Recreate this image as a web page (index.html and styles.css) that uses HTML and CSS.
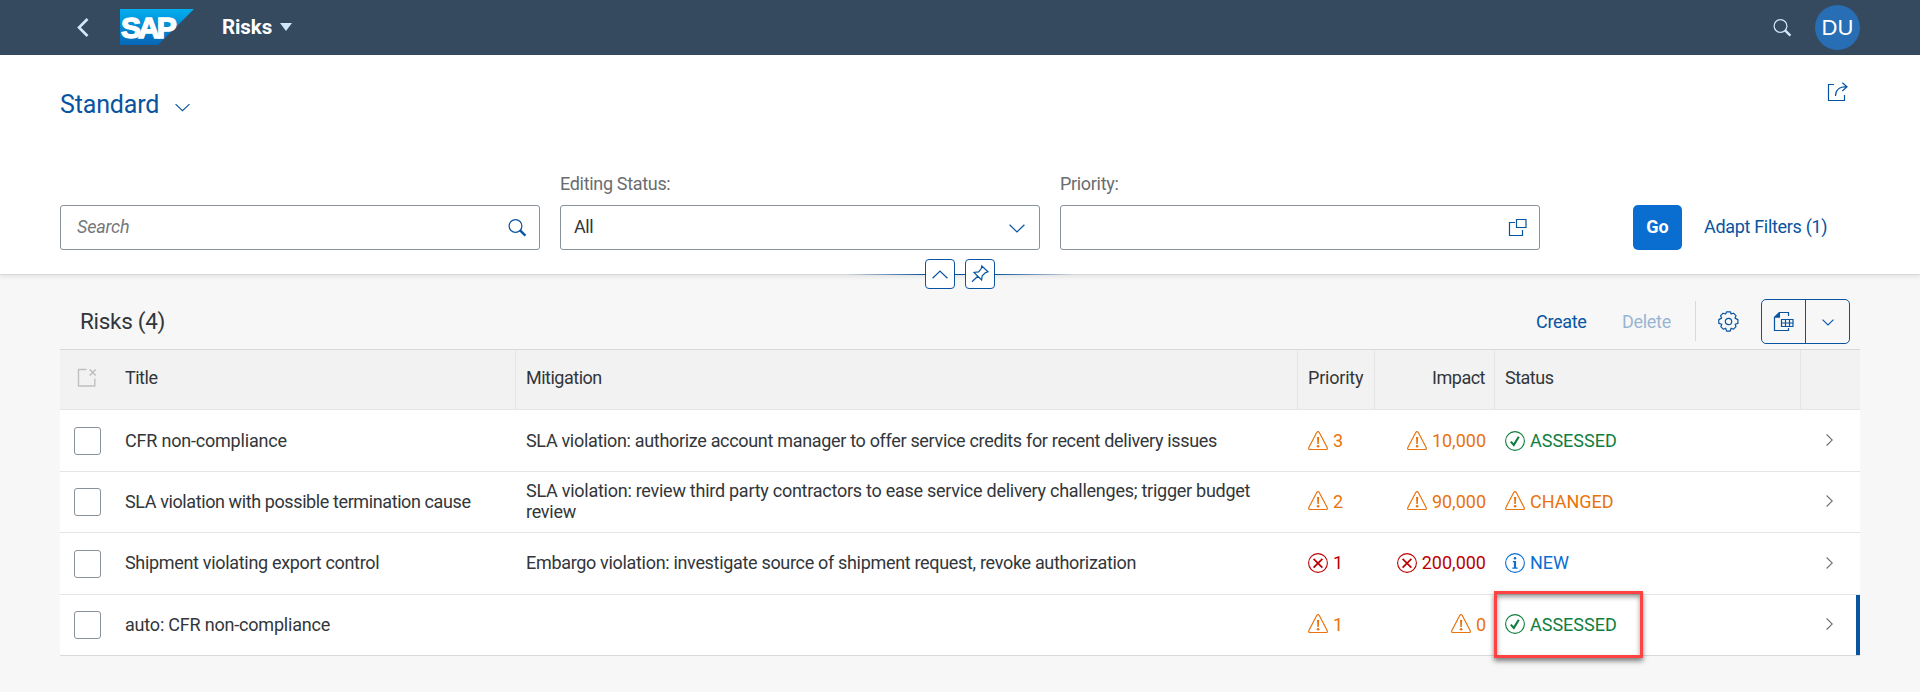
FILE: index.html
```html
<!DOCTYPE html>
<html lang="en">
<head>
<meta charset="utf-8">
<title>Risks</title>
<link rel="stylesheet" href="styles.css">
</head>
<body>
<svg class="defs" width="0" height="0">
  <symbol id="warn" viewBox="0 0 20 20"><path d="M8.700 1.500Q10 -.4 11.300 1.500L19 16.200Q20 18.500 18 18.500H2Q0 18.500 1 16.200Z" fill="none" stroke="currentColor" stroke-width="1.200"/><path d="M9 6h2.200l-.4 7h-1.400z" fill="currentColor"/><circle cx="10.100" cy="15.300" r="1.300" fill="currentColor"/></symbol>
  <symbol id="error" viewBox="0 0 20 20"><circle cx="10" cy="10" r="9.400" fill="none" stroke="currentColor" stroke-width="1.100"/><path d="M5.600 5.800l8.800 8.800M14.400 5.800l-8.800 8.800" stroke="currentColor" stroke-width="1.700"/></symbol>
  <symbol id="ok" viewBox="0 0 20 20"><circle cx="10" cy="10" r="9.400" fill="none" stroke="currentColor" stroke-width="1.100"/><path d="M5.800 10.600l3 3.300 5-8.200" fill="none" stroke="currentColor" stroke-width="2.100"/></symbol>
  <symbol id="info" viewBox="0 0 20 20"><circle cx="10" cy="10" r="9.400" fill="none" stroke="currentColor" stroke-width="1.100"/><circle cx="10" cy="5.200" r="1.300" fill="currentColor"/><path d="M7.800 8h3.300v6.500h1.600v1.300H7.300v-1.300h1.600V9.200H7.800z" fill="currentColor"/></symbol>
  <symbol id="search" viewBox="0 0 19 18"><circle cx="7.500" cy="7" r="6.400" fill="none" stroke="currentColor" stroke-width="1.200"/><path d="M11.800 11.200l5.600 5.400" stroke="currentColor" stroke-width="2.400"/></symbol>
  <symbol id="down" viewBox="0 0 16 9"><path d="M.6.8L8 7.900 15.400.8" fill="none" stroke="currentColor" stroke-width="1.200"/></symbol>
  <symbol id="next" viewBox="0 0 7 12"><path d="M.6.500L6.300 6 .6 11.500" fill="none" stroke="currentColor" stroke-width="1.100"/></symbol>
</svg>

<header class="shell">
  <svg class="back" width="12" height="19" viewBox="0 0 12 19"><path d="M10.500 1L2 9.500 10.500 18" fill="none" stroke="currentColor" stroke-width="2.600"/></svg>
  <svg class="logo" width="74" height="36" viewBox="0 0 74 36">
    <defs><linearGradient id="lg" x1="0" y1="0" x2="0" y2="1"><stop offset="0" stop-color="#00aeef"/><stop offset="1" stop-color="#0766b8"/></linearGradient></defs>
    <path d="M0 0H74L38 36H0Z" fill="url(#lg)"/>
    <text class="logo-text" x="1" y="29">SAP</text>
  </svg>
  <span class="app-title">Risks</span>
  <svg class="tri" width="12" height="8" viewBox="0 0 12 8"><path d="M0 0H12L6 8Z" fill="currentColor"/></svg>
  <svg class="shell-search" width="19" height="18"><use href="#search"/></svg>
  <span class="avatar">DU</span>
</header>

<section class="page-header">
  <div class="variant">
    <span class="variant-title">Standard</span>
    <svg class="variant-arrow" width="15" height="9"><use href="#down"/></svg>
    <svg class="share" width="21" height="19" viewBox="0 0 21 19"><path d="M7 2.500H1.500V18.500H17.500V13" fill="none" stroke="currentColor" stroke-width="1.200"/><path d="M8.500 14C8.500 8 12 4.700 20 4.700M15.300.8L20 4.700 15.300 9" fill="none" stroke="currentColor" stroke-width="1.200"/></svg>
  </div>
  <div class="filters">
    <div class="field">
      <span class="label"></span>
      <div class="input"><span class="placeholder">Search</span><svg width="19" height="18"><use href="#search"/></svg></div>
    </div>
    <div class="field">
      <span class="label snug">Editing Status:</span>
      <div class="input"><span class="value">All</span><svg class="select-arrow" width="16" height="9"><use href="#down"/></svg></div>
    </div>
    <div class="field">
      <span class="label snug">Priority:</span>
      <div class="input"><span></span><svg width="19" height="18" viewBox="0 0 19 18"><path d="M7 3.500H1.500V16.500H14.500V11M8.500.5H18V8.500H8.500Z" fill="none" stroke="currentColor" stroke-width="1.200"/></svg></div>
    </div>
    <button class="go">Go</button>
    <span class="adapt snug">Adapt Filters (1)</span>
  </div>
  <div class="anchor">
    <span class="anchor-btn"><svg width="16" height="9" viewBox="0 0 16 9"><path d="M.6 8.200L8 1.100l7.400 7.100" fill="none" stroke="currentColor" stroke-width="1.200"/></svg></span>
    <span class="anchor-btn"><svg width="18" height="18" viewBox="0 0 18 18"><path d="M1 16.800L6.800 11.200M10.800 1L17 6.800 14.600 7.600 11.200 10.800 10.600 15 3 7.500 7.600 6.900 10.300 3.500Z" fill="none" stroke="currentColor" stroke-width="1.200"/></svg></span>
  </div>
</section>

<main class="content">
  <div class="toolbar">
    <span class="table-title">Risks (4)</span>
    <span class="create">Create</span>
    <span class="delete">Delete</span>
    <span class="sep"></span>
    <svg class="gear" width="21" height="21" viewBox="0 0 21 21"><path d="M8.600.8h3.800l.7 2.200 2.400-.8 2.500 2.500-1 2.400 2.900 1.500v3.800l-2.700.9.800 2.400-2.500 2.500-2.400-1-.9 2.900H8.600l-.9-2.900-2.400 1-2.500-2.500 1-2.400L.8 12.400V8.600L3.600 7.100l-1-2.400 2.500-2.500 2.500.8z" fill="none" stroke="currentColor" stroke-width="1.200" stroke-linejoin="round"/><circle cx="10.500" cy="10.500" r="3.200" fill="none" stroke="currentColor" stroke-width="1.200"/></svg>
    <div class="split">
      <span class="split-main"><svg width="21" height="21" viewBox="0 0 21 21"><path d="M1.500 6V19.500H15.500V17M6 1.500H15.500V5" fill="none" stroke="currentColor" stroke-width="1.200"/><path d="M.9 6.800V6L6 .9h1V6.800Z" fill="currentColor"/><path d="M8.500 8.500H20V15.500H8.500ZM8.500 12H20M12.500 8V15.500M16.500 8V15.500" fill="none" stroke="currentColor" stroke-width="1.200"/></svg></span>
      <span class="split-arrow"><svg width="12" height="7" viewBox="0 0 12 7"><path d="M.5.700L6 6 11.500.700" fill="none" stroke="currentColor" stroke-width="1.100"/></svg></span>
    </div>
  </div>

  <div class="table">
    <div class="row head">
      <div class="cell sel"><svg class="clear" width="20" height="19" viewBox="0 0 20 19"><path d="M9.500 1.500H1.500V18H17.800V10.500" fill="none" stroke="currentColor" stroke-width="1.400"/><path d="M12.700 1.500l6 6M18.700 1.500l-6 6" stroke="currentColor" stroke-width="1.700"/></svg></div>
      <div class="cell"><span>Title</span></div>
      <div class="cell"><span>Mitigation</span></div>
      <div class="cell"><span class="wide">Priority</span></div>
      <div class="cell num"><span>Impact</span></div>
      <div class="cell"><span>Status</span></div>
      <div class="cell last"></div>
    </div>
    <div class="row first">
      <div class="cell sel"><span class="check"></span></div>
      <div class="cell"><span class="name-short">CFR non-compliance</span></div>
      <div class="cell"><span class="snug">SLA violation: authorize account manager to offer service credits for recent delivery issues</span></div>
      <div class="cell orange"><svg class="ic"><use href="#warn"/></svg><span>3</span></div>
      <div class="cell num orange"><svg class="ic"><use href="#warn"/></svg><span>10,000</span></div>
      <div class="cell green"><svg class="ic"><use href="#ok"/></svg><span>ASSESSED</span></div>
      <div class="cell last"><svg class="nav" width="7" height="12"><use href="#next"/></svg></div>
    </div>
    <div class="row short">
      <div class="cell sel"><span class="check"></span></div>
      <div class="cell"><span class="name-long">SLA violation with possible termination cause</span></div>
      <div class="cell"><p class="wrapped">SLA violation: review third party contractors to ease service delivery challenges; trigger budget<br>review</p></div>
      <div class="cell orange"><svg class="ic"><use href="#warn"/></svg><span>2</span></div>
      <div class="cell num orange"><svg class="ic"><use href="#warn"/></svg><span>90,000</span></div>
      <div class="cell orange"><svg class="ic"><use href="#warn"/></svg><span>CHANGED</span></div>
      <div class="cell last"><svg class="nav" width="7" height="12"><use href="#next"/></svg></div>
    </div>
    <div class="row">
      <div class="cell sel"><span class="check"></span></div>
      <div class="cell"><span class="snug">Shipment violating export control</span></div>
      <div class="cell"><span class="snug">Embargo violation: investigate source of shipment request, revoke authorization</span></div>
      <div class="cell red"><svg class="ic"><use href="#error"/></svg><span>1</span></div>
      <div class="cell num red"><svg class="ic"><use href="#error"/></svg><span>200,000</span></div>
      <div class="cell blue"><svg class="ic"><use href="#info"/></svg><span>NEW</span></div>
      <div class="cell last"><svg class="nav" width="7" height="12"><use href="#next"/></svg></div>
    </div>
    <div class="row short active">
      <div class="cell sel"><span class="check"></span></div>
      <div class="cell"><span class="name-short">auto: CFR non-compliance</span></div>
      <div class="cell"></div>
      <div class="cell orange"><svg class="ic"><use href="#warn"/></svg><span>1</span></div>
      <div class="cell num orange"><svg class="ic"><use href="#warn"/></svg><span>0</span></div>
      <div class="cell green marked"><svg class="ic"><use href="#ok"/></svg><span>ASSESSED</span><span class="marker"></span></div>
      <div class="cell last"><svg class="nav" width="7" height="12"><use href="#next"/></svg></div>
    </div>
  </div>
</main>
</body>
</html>
```

FILE: styles.css
```css
* { box-sizing: border-box; }
body { margin: 0; height: 692px; overflow: hidden; background: #f7f7f7; color: #32363a; font: 18px/21px Roboto, "Liberation Sans", sans-serif; }
span { white-space: nowrap; }
svg { display: block; flex: none; overflow: visible; }
.defs { position: absolute; }
.snug { letter-spacing: -.32px; }

.shell { display: flex; align-items: center; height: 55px; padding: 0 60px 0 76px; background: #354a5f; color: #d1e8ff; }
.back { margin-left: 1px; }
.logo { margin: -1px 0 0 31px; }
.logo-text { font: 700 30px "Liberation Sans", sans-serif; letter-spacing: -3px; fill: #fff; stroke: #fff; stroke-width: 1.400px; }
.app-title { margin-left: 28px; width: 50px; font-size: 20.5px; font-weight: 700; letter-spacing: -.1px; color: #fff; }
.tri { margin-left: 8px; margin-top: -1px; }
.shell-search { margin-left: auto; }
.avatar { display: flex; align-items: center; justify-content: center; width: 45px; height: 45px; margin-left: 23px; border-radius: 50%; background: #276eb5; color: #fff; font: 22px "Liberation Sans", sans-serif; }

.page-header { position: relative; height: 220px; background: #fff; border-bottom: 1px solid #d9d9d9; box-shadow: 0 2px 4px rgba(0,0,0,.08); color: #0854a0; }
.variant { display: flex; height: 111px; padding: 0 72px 0 60px; }
.variant-title { padding-top: 39px; width: 100px; font-size: 25px; letter-spacing: -.15px; }
.variant-arrow { margin: 48px 0 0 15px; }
.share { margin: 27px 0 0 auto; }
.filters { display: flex; align-items: flex-end; padding: 0 0 0 60px; }
.field { width: 480px; margin-right: 20px; }
.label { display: block; height: 39px; padding-top: 7px; color: #6a6d70; }
.input { display: flex; align-items: center; justify-content: space-between; height: 45px; padding: 0 12px 0 13px; border: 1px solid #89919a; border-radius: 3px; background: #fff; color: #0854a0; }
.value { color: #32363a; letter-spacing: -.4px; padding-bottom: 2px; }
.placeholder { padding: 0 0 2px 3px; font-style: italic; letter-spacing: -.2px; color: #74777a; }
.select-arrow { margin: 2px 2px 0 0; }
.go { width: 49px; height: 45px; margin-left: 73px; padding: 0 0 2px; border: 0; border-radius: 5px; background: #0a6ed1; color: #fff; font: 700 18px/21px Roboto, sans-serif; }
.adapt { margin: 0 0 13px 22px; }
.anchor { position: absolute; left: 845px; bottom: -15px; width: 230px; height: 30px; display: flex; justify-content: center; gap: 10px; background: linear-gradient(90deg, rgba(8,84,160,0), #0854a0 35%, #0854a0 65%, rgba(8,84,160,0)) 0 15px / 100% 1px no-repeat; }
.anchor-btn { display: flex; align-items: center; justify-content: center; width: 30px; height: 30px; border: 1px solid #0854a0; border-radius: 4px; background: #fff; }

.content { padding: 0 60px; }
.toolbar { display: flex; align-items: center; height: 74px; padding: 18px 10px 0 20px; color: #0854a0; }
.table-title { margin-right: auto; font-size: 22.5px; letter-spacing: -.3px; color: #32363a; }
.create, .delete { width: 51px; padding-top: 1px; letter-spacing: -.3px; }
.delete { margin-left: 35px; opacity: .4; }
.sep { width: 1px; height: 40px; margin-left: 22px; background: #d9d9d9; }
.gear { margin-left: 22px; }
.split { display: flex; width: 89px; height: 45px; margin-left: 22px; border: 1px solid #0854a0; border-radius: 5px; }
.split-main, .split-arrow { flex: 1; display: flex; align-items: center; justify-content: center; }
.split-arrow { border-left: 1px solid #0854a0; padding-top: 3px; }

.table { border-top: 1px solid #d9d9d9; }
.row { display: grid; grid-template-columns: 55px 401px 782px 77px 120px 306px 59px; height: 62px; border-bottom: 1px solid #e5e5e5; background: #fff; }
.row.short { height: 61px; }
.row.head { height: 60px; background: #f2f2f2; }
.row.active { border-bottom-color: #d9d9d9; box-shadow: inset -4px 0 #0854a0; }
.cell { display: flex; align-items: center; padding: 0 9px 2px 10px; }
.first .cell { padding-bottom: 0; }
.head .cell { border-right: 1px solid #e5e5e5; padding-bottom: 4px; letter-spacing: -.5px; }
.head .wide { letter-spacing: -.2px; }
.head .sel, .head .last { border-right: 0; }
.name-short { letter-spacing: -.2px; }
.name-long { letter-spacing: -.4px; }
.wrapped { margin: 0; white-space: nowrap; letter-spacing: -.26px; }
.cell.sel { padding: 0 0 0 14px; }
.cell.num { justify-content: flex-end; }
.cell.last { padding: 0 0 2px 25px; color: #6a6d70; }
.check { width: 27px; height: 28px; border: 1px solid #89919a; border-radius: 3px; background: #fff; }
.clear { margin: -4px 0 0 3px; color: #bfc0c1; }
.ic { width: 20px; height: 20px; margin-right: 5px; }
.orange { color: #e9730c; }
.green { color: #107e3e; }
.red { color: #bb0000; }
.blue { color: #0a6ed1; }
.marked { position: relative; }
.marker { position: absolute; left: -1px; top: -4px; width: 149px; height: 67px; border: 3px solid #ff4343; box-shadow: 0 3px 5px rgba(0,0,0,.5), inset 0 3px 5px rgba(0,0,0,.4); }
```
